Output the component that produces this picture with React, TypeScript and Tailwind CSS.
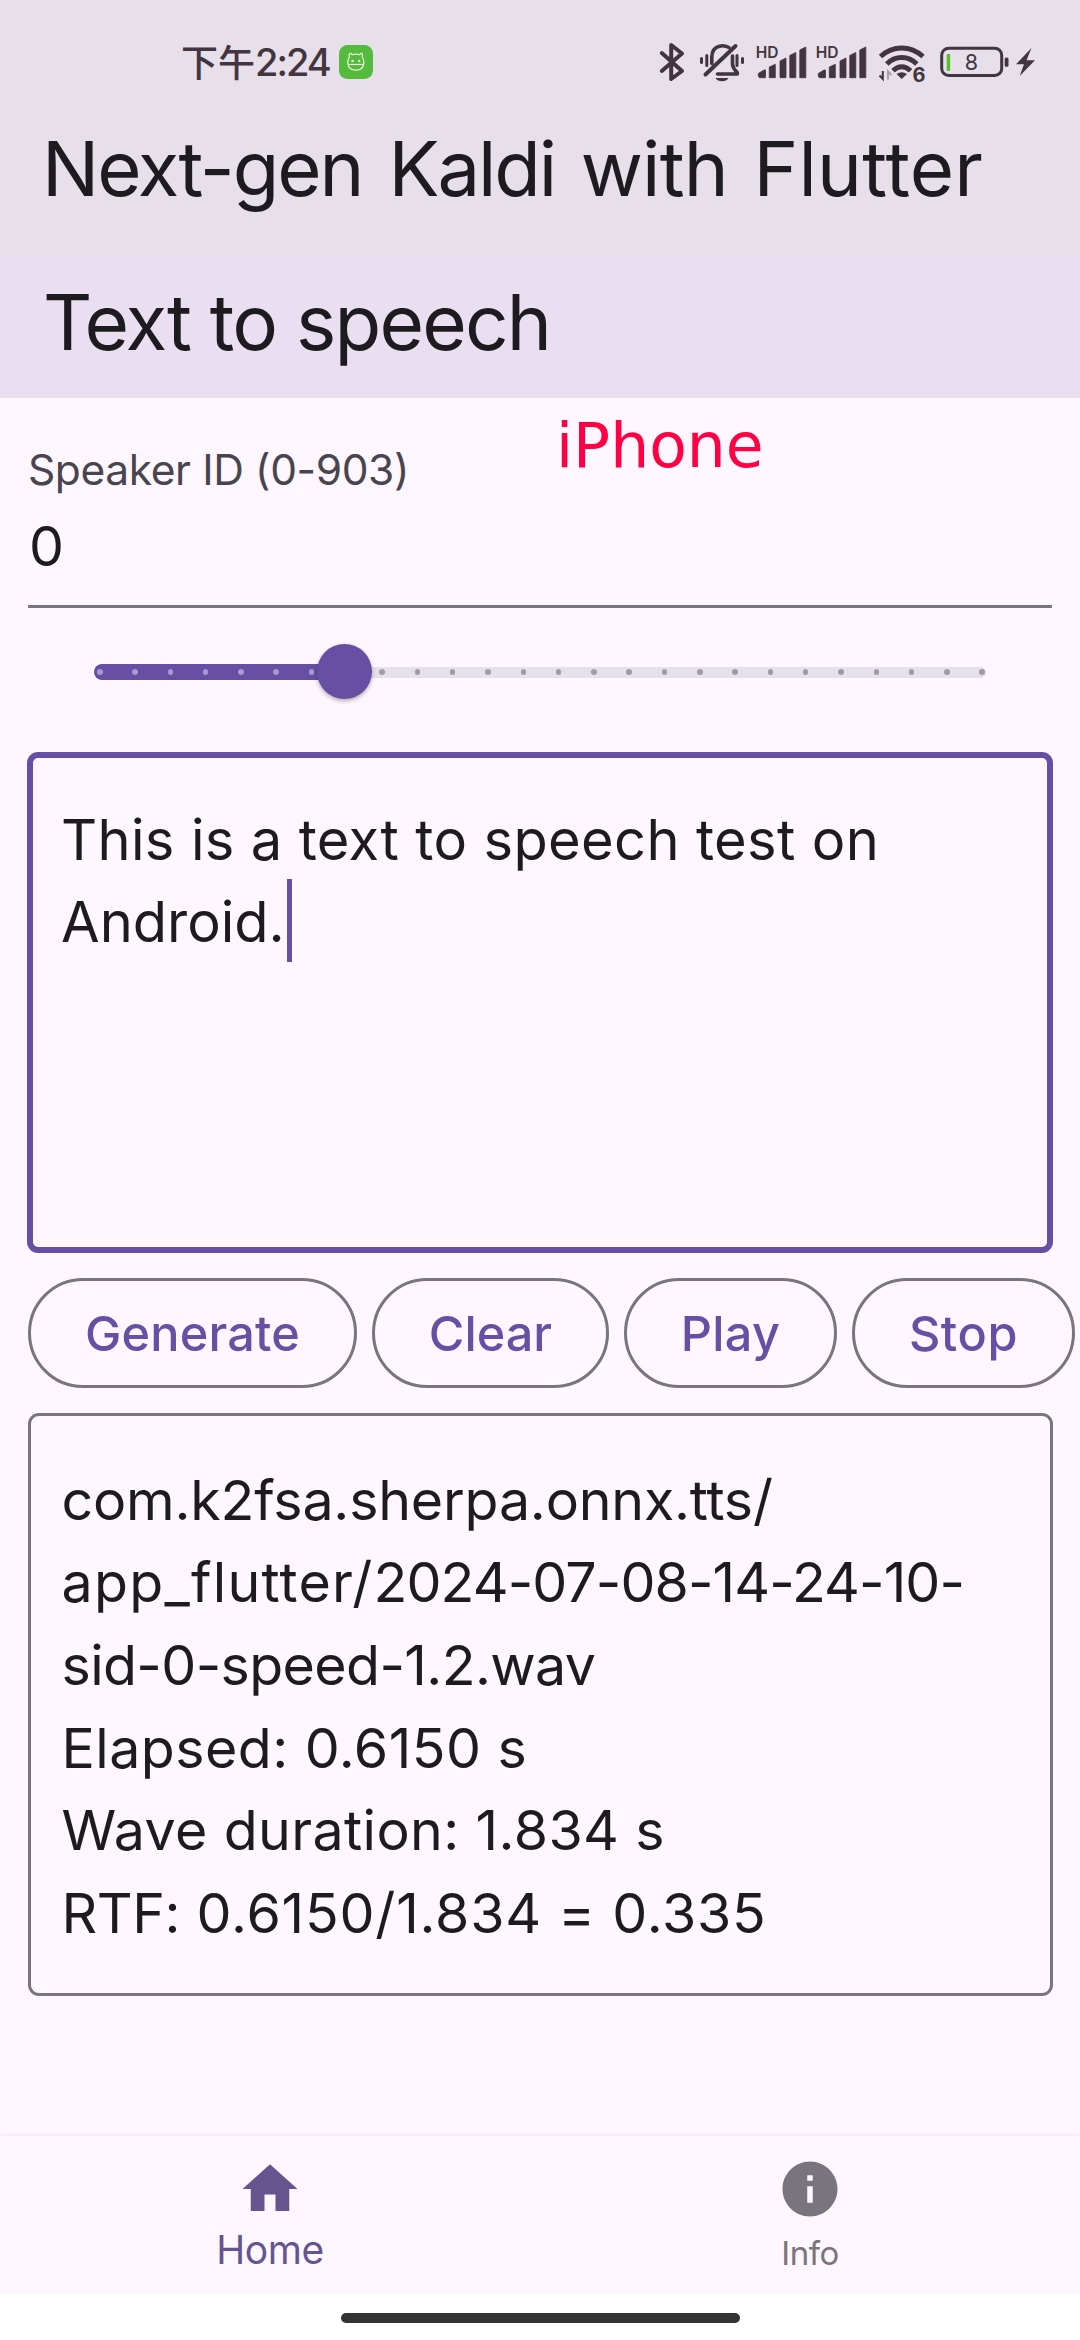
import type { ReactNode } from 'react'

const INK = '#43353f'

function StatusIcon({ x, w, className, children }: { x: number; w: number; className?: string; children: ReactNode }) {
  return (
    <svg className={`shrink-0 overflow-visible ${className ?? ''}`} width={w} height={48} viewBox={`${x} 40 ${w} 48`} fill="none" stroke="none">
      {children}
    </svg>
  )
}

function Signal({ className }: { className: string }) {
  return (
    <StatusIcon x={754} w={54} className={className}>
      <text x={754.8} y={57.6} fontFamily="Inter, sans-serif" fontSize={15.5} fontWeight={600} fill={INK}>HD</text>
      <path
        fill={INK}
        d="M757.3 76.5V73.5L763 70H764.5V77.7H758.5ZM768.3 77.7V67L774.3 64.3V77.7ZM779 77.7V61L785 58V77.7ZM788.8 77.7V55.5L794.8 52.5V77.7ZM798.8 77.7V50L804.8 47V77.7Z"
        stroke={INK}
        strokeWidth={0.8}
        strokeLinejoin="round"
      />
    </StatusIcon>
  )
}

function StatusBar() {
  return (
    <div className="flex h-[119px] items-start pt-10 text-[#43353f]">
      <div className="flex h-[44px] w-[657px] items-start pl-[181px]">
        <span className="mt-[-1px] font-['Noto_Sans_CJK_SC',sans-serif] text-[37px] leading-[44px] font-medium">下午</span>
        <span className="w-[74px] font-[Inter,sans-serif] text-[38px] leading-[44px] font-medium tracking-[-2px]">2:24</span>
        <svg className="mt-[4.5px] ml-[10px]" width={34} height={34} viewBox="0 0 34 34" fill="none">
          <rect width={34} height={34} rx={8.5} fill="#54bb3c" />
          <path d="M10.5 11.5C9 8.5 12 7.5 13.2 9.8Q17 8.6 20.5 9.8C21.7 7.5 24.7 8.5 23 11.5Q25.2 14.5 24.8 18.5Q24 25.2 17 25.2Q9.5 25.2 8.8 18.5Q8.5 14.5 10.5 11.5Z" stroke="#e9f9dc" strokeWidth={1.2} />
          <path d="M9 19.5H24.7" stroke="#e9f9dc" strokeWidth={1.2} />
          <circle cx={13.6} cy={16} r={1.2} fill="#e9f9dc" />
          <circle cx={20.2} cy={16} r={1.2} fill="#e9f9dc" />
        </svg>
      </div>
      <StatusIcon x={657} w={28} className="ml-px">
        <path d="M660.8 53 681 71 670.2 79V45L681 53.5 660.8 71" stroke={INK} strokeWidth={4} strokeLinecap="round" strokeLinejoin="round" />
      </StatusIcon>
      <StatusIcon x={697} w={48} className="ml-3">
        <g stroke={INK} strokeLinecap="round" strokeLinejoin="round">
          <path d="M700.5 58.5V62.5M705.8 55.5V65.5M736 55.5V65.5M741.5 58.5V62.5" strokeWidth={3} />
          <path d="M704.5 74.5 734.5 46" strokeWidth={4} />
          <path d="M710.8 63.5V57Q711 48 718.5 46.2Q723 44.8 728 47.5" strokeWidth={3.6} />
          <path d="M731.5 56V64.5Q732 68.5 736.3 72.5V74H716.5" strokeWidth={3.6} />
        </g>
        <path d="M714.5 78H727.5Q725.5 81.3 721 81.3T714.5 78Z" fill={INK} />
      </StatusIcon>
      <Signal className="ml-[9px]" />
      <Signal className="ml-[6.3px]" />
      <StatusIcon x={876} w={56} className="ml-[7.7px]">
        <g stroke={INK} strokeWidth={5}>
          <path d="M879.5 56.5Q889 48 900.7 48T922 56.5" />
          <path d="M885.8 64Q892 57.5 900.7 57.5T915.8 64" />
          <path d="M892 70.8Q896 66.8 900.7 66.8T909.5 70.8" />
        </g>
        <path d="M895.5 74Q900.7 70.5 906 74L900.7 79Z" fill={INK} />
        <path d="M881.8 71V79L878.5 75.5" stroke={INK} strokeWidth={2} />
        <path d="M887 79.5V71.5L890.5 75" stroke="#a99daa" strokeWidth={2} />
        <text x={911.5} y={81.8} fontFamily="Inter, sans-serif" fontSize={20} fontWeight={700} fill={INK}>6</text>
      </StatusIcon>
      <StatusIcon x={938} w={72} className="ml-[6px]">
        <rect x={940.7} y={48.2} width={60} height={27.2} rx={7} stroke={INK} strokeWidth={3} />
        <rect x={945.7} y={54} width={3.4} height={17} rx={1} fill="#4fc424" />
        <rect x={1003.7} y={57.5} width={3.8} height={9.3} rx={1.5} fill={INK} />
        <text x={970.3} y={70.3} textAnchor="middle" fontFamily="Inter, sans-serif" fontSize={21.5} fill={INK}>8</text>
      </StatusIcon>
      <StatusIcon x={1014} w={22} className="ml-1">
        <path d="M1030.5 48 1015 64.3H1023L1018.7 76 1034 60.2H1025.5Z" fill={INK} />
      </StatusIcon>
    </div>
  )
}

const TICKS = Array.from({ length: 26 }, (_, i) => i)

function Slider() {
  return (
    <div className="relative mx-[94px] mb-[15px] h-[129px]">
      <div className="absolute top-[59px] right-0 left-0 h-[11px] rounded-full bg-[#e6e0e9]" />
      <div className="absolute top-[56px] left-0 h-[16.5px] w-[250px] rounded-full bg-[#6750a4]" />
      <div className="absolute top-[61.5px] right-[1px] left-[3px] flex justify-between">
        {TICKS.map((i) => (
          <span key={i} className={i < 7 ? 'size-[5.5px] rounded-full bg-[#a899cf]' : 'size-[5.5px] rounded-full bg-[#a29aa6]'} />
        ))}
      </div>
      <div className="absolute top-[36.5px] left-[222.5px] size-[55px] rounded-full bg-[#6750a4] shadow-[0_2px_4px_rgba(0,0,0,0.3)]" />
    </div>
  )
}

const BUTTONS = [
  { label: 'Generate', box: 'w-[329px] tracking-[0.2px]' },
  { label: 'Clear', box: 'w-[237px] tracking-[0px]' },
  { label: 'Play', box: 'w-[213px] tracking-[0.3px]' },
  { label: 'Stop', box: 'w-[223px] tracking-[0.6px]' },
]

export default function App() {
  return (
    <div className="flex h-[2340px] w-[1080px] flex-col overflow-hidden bg-white font-[Inter,sans-serif] whitespace-nowrap text-[#1d1b20]">
      <header className="h-[256px] shrink-0 bg-[#e7dfea]">
        <StatusBar />
        <h1 className="pl-[42px] text-[76px] leading-[98px]">
          <span className="tracking-[-2.1px]">Next-gen</span>
          <span className="ml-[7px] tracking-[-2.1px]"> Kaldi</span>
          <span className="ml-[5px] tracking-[-0.8px]"> with</span>
          <span className="ml-[4px] tracking-[0.2px]"> Flutter</span>
        </h1>
      </header>
      <div className="h-[142px] shrink-0 bg-[#eadff0] pt-[16px]">
        <h2 className="pl-[43px] text-[76.4px] leading-[100px] tracking-[-1.8px]">Text to speech</h2>
      </div>

      <main className="relative flex h-[1738px] shrink-0 flex-col bg-[#fef7ff]">
        <span className="absolute top-[10px] left-[556px] font-['DejaVu_Sans',sans-serif] text-[61.5px] leading-[76px] text-[#ff0044]">iPhone</span>
        <div className="mx-7 border-b-[3px] border-[#79747e] pt-[42px] pb-[16px]">
          <div className="text-[42.5px] leading-[60px] tracking-[-0.4px] text-[#49454f]">Speaker ID (0-903)</div>
          <div className="mt-[5px] mb-px pl-px text-[55.5px] leading-[82.5px]">0</div>
        </div>
        <Slider />
        <div className="mx-[27px] h-[501px] rounded-[11px] border-[6px] border-[#6750a4] pt-[41px] pl-[28px] text-[56px] leading-[82.67px]">
          <div className="tracking-[0.35px]">This is a text to speech test on</div>
          <div className="flex">
            Android.
            <span className="mt-[-2px] ml-[2px] h-[82.5px] w-[5.5px] bg-[#6750a4]" />
          </div>
        </div>
        <div className="mt-[25px] ml-7 flex gap-[15px]">
          {BUTTONS.map((b) => (
            <button key={b.label} className={`h-[110px] shrink-0 rounded-full border-[3px] border-[#79747e] pt-[3px] text-center text-[48.6px] font-medium text-[#6750a4] ${b.box}`}>
              {b.label}
            </button>
          ))}
        </div>
        <div className="mx-[27.5px] mt-[25px] h-[583px] rounded-[11px] border-[3px] border-[#79747e] pt-[43px] pl-[31px] text-[55.5px] leading-[82.67px]">
          <div className="tracking-[-0.2px]">com.k2fsa.sherpa.onnx.tts/</div>
          <div>
            <span className="tracking-[1.25px]">app_flutter/</span>
            <span className="tracking-[-0.9px]">2024-07-08-14-24-10-</span>
          </div>
          <div className="tracking-[-0.62px]">sid-0-speed-1.2.wav</div>
          <div className="tracking-[0.45px]">Elapsed: 0.6150 s</div>
          <div className="tracking-[0.38px]">Wave duration: 1.834 s</div>
          <div className="tracking-[0.8px]">
            <span className="tracking-[-0.4px]">RTF:</span> 0.6150/1.834 = 0.335
          </div>
        </div>
      </main>

      <nav className="relative grid h-[158px] shrink-0 grid-cols-2 bg-[#fef7ff] shadow-[0_-1px_4px_rgba(0,0,0,0.07)]">
        <div className="flex flex-col items-center pt-[20px] text-[#65558f]">
          <svg width={66} height={66} viewBox="0 0 24 24" fill="currentColor">
            <path d="M10 20v-6h4v6h5v-8h3L12 3 2 12h3v8z" />
          </svg>
          <span className="mt-px text-[39px] leading-[54px] tracking-[-0.5px]">Home</span>
        </div>
        <div className="flex flex-col items-center pt-[20px] text-[#79747e]">
          <svg width={66} height={66} viewBox="0 0 24 24" fill="currentColor">
            <path d="M12 2C6.48 2 2 6.48 2 12s4.48 10 10 10 10-4.48 10-10S17.52 2 12 2zm1 15h-2v-6h2v6zm0-8h-2V7h2v2z" />
          </svg>
          <span className="mt-[4px] text-[33px] leading-[54px] tracking-[-0.5px]">Info</span>
        </div>
      </nav>
      <footer className="relative flex h-[46px] shrink-0 justify-center bg-white pt-[19px]">
        <div className="h-[10px] w-[399px] rounded-full bg-[#333333]" />
      </footer>
    </div>
  )
}
